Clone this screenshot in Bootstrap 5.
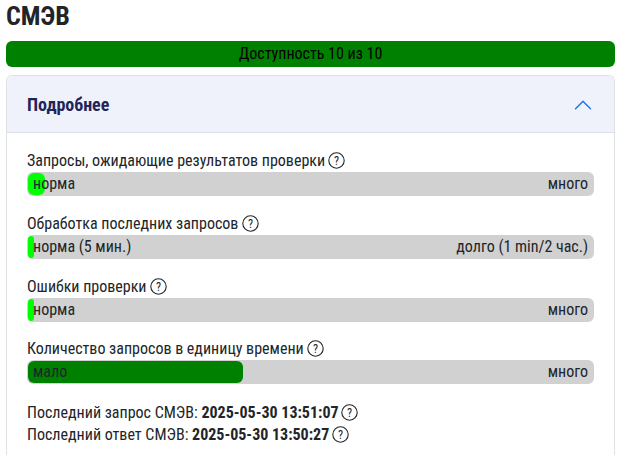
<!DOCTYPE html>
<html lang="en">
<head>
    <meta charset="UTF-8">
    <title>СМЭВ</title>
    <link href="https://cdn.jsdelivr.net/npm/bootstrap@5.3.3/dist/css/bootstrap.min.css" rel="stylesheet">
    <style>
        body {
            font-family: "Roboto Condensed", Roboto, sans-serif;
            font-stretch: 75%;
            font-size: 16px;
            color: #212529;
            overflow: hidden;
        }
        .page-wrap { padding: 0 8px 0 6px; }
        .page-title { font-size: 26px; font-weight: 700; line-height: 32px; margin: 0; color: #212529; }
        .avail-bar { height: 26px; margin-top: 9px; background: green; border-radius: 6px; color: #000; line-height: 26px; text-align: center; }
        .more-box { margin-top: 8px; border: 1px solid #dee2e6; border-bottom: 0; border-radius: 6px 6px 0 0; }
        .more-head { height: 57px; padding: 1px 21px 0 20px; background: #f0f2fb; border-bottom: 1px solid #dee2e6; border-radius: 6px 6px 0 0; color: #1f2558; font-weight: 700; font-size: 18px; }
        .more-body { padding: 17.4px 20px 20px; }
        .metric { margin-bottom: 16.67px; }
        .metric-label { line-height: 22px; }
        .meter { position: relative; height: 24px; background: #d1d1d1; border-radius: 6px; overflow: hidden; line-height: 24px; padding: 0 6px; }
        .meter-fill { position: absolute; left: 1px; top: 1px; bottom: 1px; border-radius: 6px; }
        .meter-text { position: relative; }
        .help-icon { width: 17px; height: 17px; vertical-align: -3px; margin-left: -0.5px; }
        .time-block { padding-top: 1px; }
        .time-line { line-height: 22px; }
        .time-line .help-icon { margin-left: -1px; }
    </style>
</head>
<body>
    <div class="page-wrap">
        <h1 class="page-title">СМЭВ</h1>
        <div class="avail-bar">Доступность 10 из 10</div>

        <div class="more-box">
            <div class="more-head d-flex align-items-center justify-content-between">
                <span>Подробнее</span>
                <svg width="20" height="20" viewBox="0 0 16 16" fill="#0d6efd"><path fill-rule="evenodd" d="M1.646 11.354a.5.5 0 0 1 0-.708l6-6a.5.5 0 0 1 .708 0l6 6a.5.5 0 0 1-.708.708L8 5.707l-5.646 5.647a.5.5 0 0 1-.708 0z"/></svg>
            </div>
            <div class="more-body">
                <div class="metric">
                    <div class="metric-label">Запросы, ожидающие результатов проверки <svg class="help-icon" viewBox="0 0 17 17"><circle cx="8.5" cy="8.5" r="7.7" fill="none" stroke="#212529" stroke-width="1.1"/><text x="8.5" y="12.7" font-size="12" text-anchor="middle" fill="#212529">?</text></svg></div>
                    <div class="meter d-flex justify-content-between">
                        <div class="meter-fill" style="width: 17px; background: #00ff00;"></div>
                        <span class="meter-text">норма</span><span class="meter-text">много</span>
                    </div>
                </div>
                <div class="metric">
                    <div class="metric-label">Обработка последних запросов <svg class="help-icon" viewBox="0 0 17 17"><circle cx="8.5" cy="8.5" r="7.7" fill="none" stroke="#212529" stroke-width="1.1"/><text x="8.5" y="12.7" font-size="12" text-anchor="middle" fill="#212529">?</text></svg></div>
                    <div class="meter d-flex justify-content-between">
                        <div class="meter-fill" style="width: 6px; background: #00ff00;"></div>
                        <span class="meter-text">норма (5 мин.)</span><span class="meter-text">долго (1 min/2 час.)</span>
                    </div>
                </div>
                <div class="metric">
                    <div class="metric-label">Ошибки проверки <svg class="help-icon" viewBox="0 0 17 17"><circle cx="8.5" cy="8.5" r="7.7" fill="none" stroke="#212529" stroke-width="1.1"/><text x="8.5" y="12.7" font-size="12" text-anchor="middle" fill="#212529">?</text></svg></div>
                    <div class="meter d-flex justify-content-between">
                        <div class="meter-fill" style="width: 6px; background: #00ff00;"></div>
                        <span class="meter-text">норма</span><span class="meter-text">много</span>
                    </div>
                </div>
                <div class="metric">
                    <div class="metric-label">Количество запросов в единицу времени <svg class="help-icon" viewBox="0 0 17 17"><circle cx="8.5" cy="8.5" r="7.7" fill="none" stroke="#212529" stroke-width="1.1"/><text x="8.5" y="12.7" font-size="12" text-anchor="middle" fill="#212529">?</text></svg></div>
                    <div class="meter d-flex justify-content-between">
                        <div class="meter-fill" style="width: 215px; background: green;"></div>
                        <span class="meter-text">мало</span><span class="meter-text">много</span>
                    </div>
                </div>
                <div class="time-block">
                    <div class="time-line">Последний запрос СМЭВ: <b>2025-05-30 13:51:07</b> <svg class="help-icon" viewBox="0 0 17 17"><circle cx="8.5" cy="8.5" r="7.7" fill="none" stroke="#212529" stroke-width="1.1"/><text x="8.5" y="12.7" font-size="12" text-anchor="middle" fill="#212529">?</text></svg></div>
                    <div class="time-line">Последний ответ СМЭВ: <b>2025-05-30 13:50:27</b> <svg class="help-icon" viewBox="0 0 17 17"><circle cx="8.5" cy="8.5" r="7.7" fill="none" stroke="#212529" stroke-width="1.1"/><text x="8.5" y="12.7" font-size="12" text-anchor="middle" fill="#212529">?</text></svg></div>
                </div>
            </div>
        </div>
    </div>
    <script src="https://cdn.jsdelivr.net/npm/bootstrap@5.3.3/dist/js/bootstrap.bundle.min.js"></script>
</body>
</html>
